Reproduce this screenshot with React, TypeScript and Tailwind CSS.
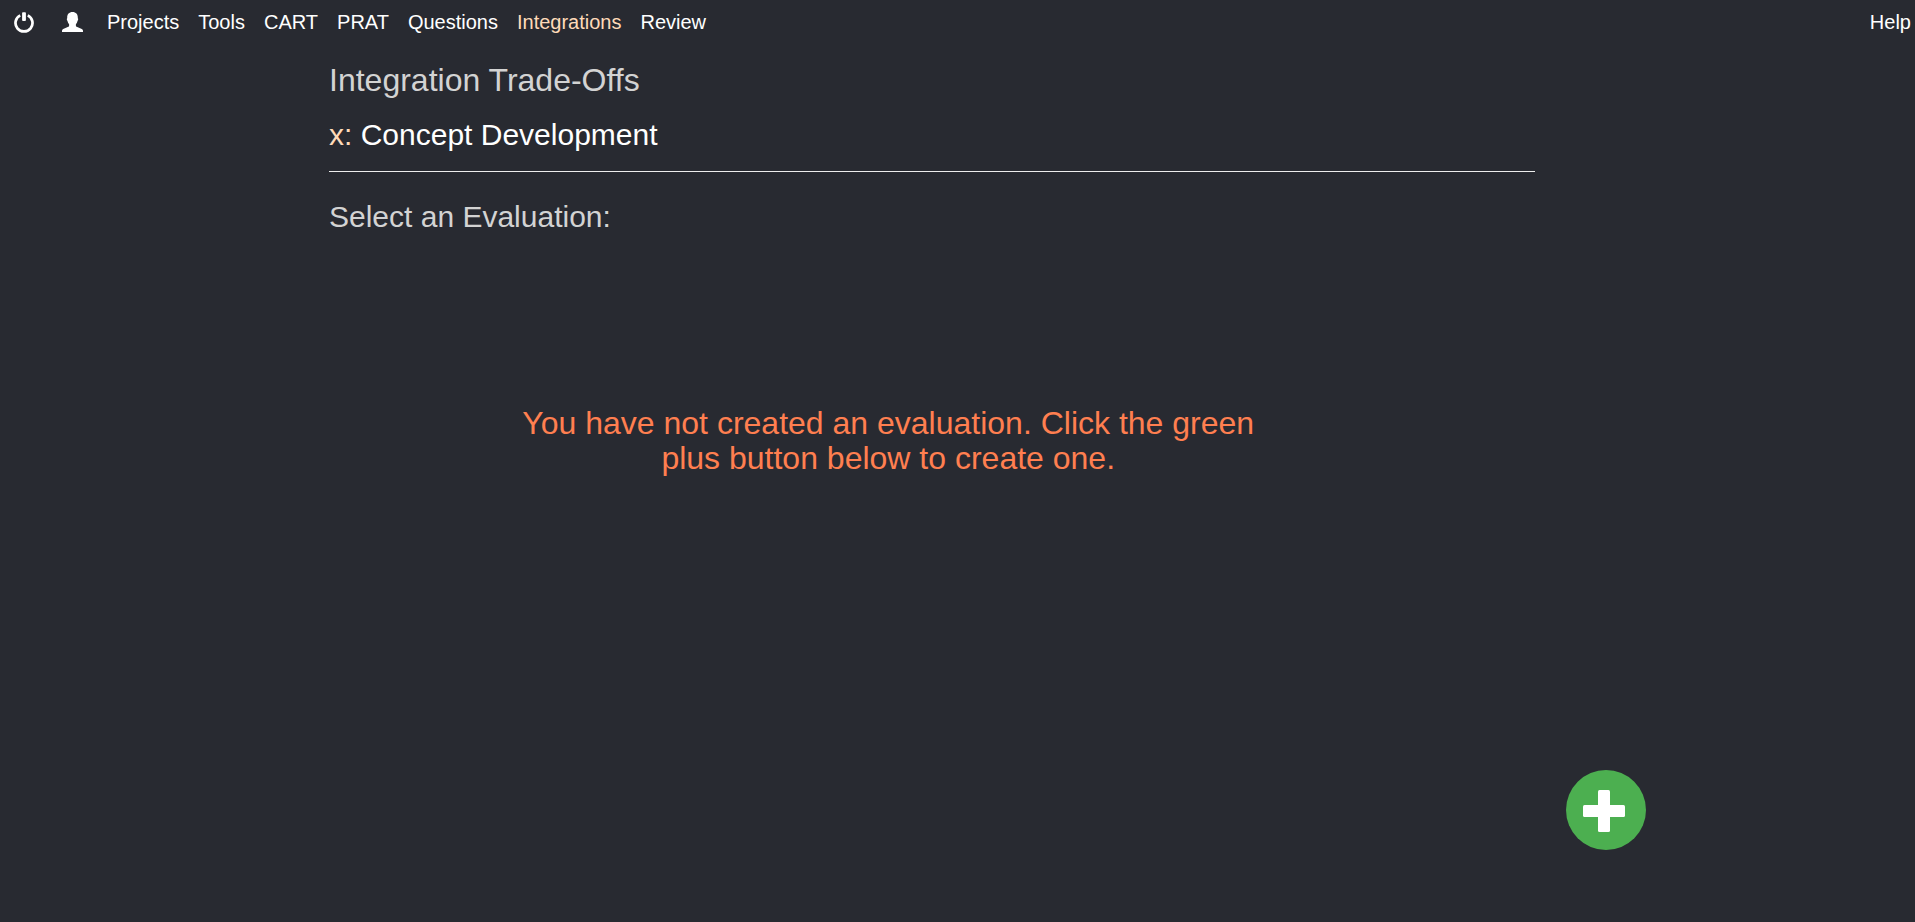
const navLinks = ['Projects', 'Tools', 'CART', 'PRAT', 'Questions', 'Integrations', 'Review'];

function PowerIcon() {
  return (
    <svg viewBox="0 0 20 21" className="h-[21px] w-5" aria-hidden="true">
      <path
        d="M6.2 3.350A8.500 8.500 0 1 0 13.800 3.350"
        fill="none"
        stroke="currentColor"
        strokeWidth="2.7"
      />
      <rect x="8.1" y="0.2" width="3.800" height="8.800" rx="0.9" fill="currentColor" />
    </svg>
  );
}

function UserIcon() {
  return (
    <svg viewBox="0 0 21 20" className="h-5 w-[21px]" aria-hidden="true">
      <path
        d="M10.5 0C7 0 5.2 2.4 5.2 5.4c0 .5.1.8-.2 1.1-.4.5-.1 1.7.4 2.3.3 1.5.9 2.6 1.7 3.4v1.5c0 .5-.3.9-.8 1.1L1.2 17.1C.4 17.5 0 18 0 18.700V20h21v-1.300c0-.7-.4-1.200-1.200-1.600l-5.100-2.300c-.5-.2-.8-.6-.8-1.100v-1.500c.8-.8 1.400-1.900 1.700-3.400.5-.6.8-1.800.4-2.300-.3-.3-.2-.6-.2-1.100C15.800 2.400 14 0 10.500 0z"
        fill="currentColor"
      />
    </svg>
  );
}

function PlusIcon() {
  return (
    <svg viewBox="0 0 42 42" className="size-[42px]" aria-hidden="true">
      <rect x="15" y="0" width="12" height="42" rx="1.5" fill="currentColor" />
      <rect x="0" y="15" width="42" height="12" rx="1.5" fill="currentColor" />
    </svg>
  );
}

export default function App() {
  return (
    <div className="flex min-h-screen flex-col bg-[#282a31] font-['Liberation_Sans',Arial,sans-serif] text-white">
      <nav className="flex items-center pt-2 pr-1 pl-3.5 text-xl leading-7" aria-label="Main">
        <a href="#logout" aria-label="Log out" className="mr-7">
          <PowerIcon />
        </a>
        <a href="#account" aria-label="Account" className="mr-6">
          <UserIcon />
        </a>
        <ul className="flex gap-[19px]">
          {navLinks.map((label) => (
            <li key={label}>
              <a
                href={`#${label.toLowerCase()}`}
                aria-current={label === 'Integrations' ? 'page' : undefined}
                className="aria-[current=page]:text-[#ffdab9]"
              >
                {label}
              </a>
            </li>
          ))}
        </ul>
        <a href="#help" className="ml-auto">
          Help
        </a>
      </nav>

      <main className="ml-[329px] w-[63%] pt-[27px]">
        <h1 className="text-[32px] leading-[35px] text-[#d3d3d3]">Integration Trade-Offs</h1>
        <h2 className="mt-5 text-3xl leading-[33px]">
          <span className="text-[#ffdab9]">x:</span> Concept Development
        </h2>
        <hr className="mt-5 border-[#eeeeee]" />
        <h2 className="mt-7 text-3xl leading-[33px] text-[#d3d3d3]">Select an Evaluation:</h2>
        <p className="mt-[173px] mr-22 text-center text-[32px] leading-[35px] text-[#ff7f50]">
          <span className="inline-block max-w-[760px]">
            You have not created an evaluation. Click the green plus button below to create one.
          </span>
        </p>
      </main>

      <button
        type="button"
        aria-label="Create evaluation"
        className="fixed right-[269px] bottom-18 flex size-20 items-center justify-center rounded-full bg-[#4caf50] pt-0.5 pr-1"
      >
        <PlusIcon />
      </button>
    </div>
  );
}
